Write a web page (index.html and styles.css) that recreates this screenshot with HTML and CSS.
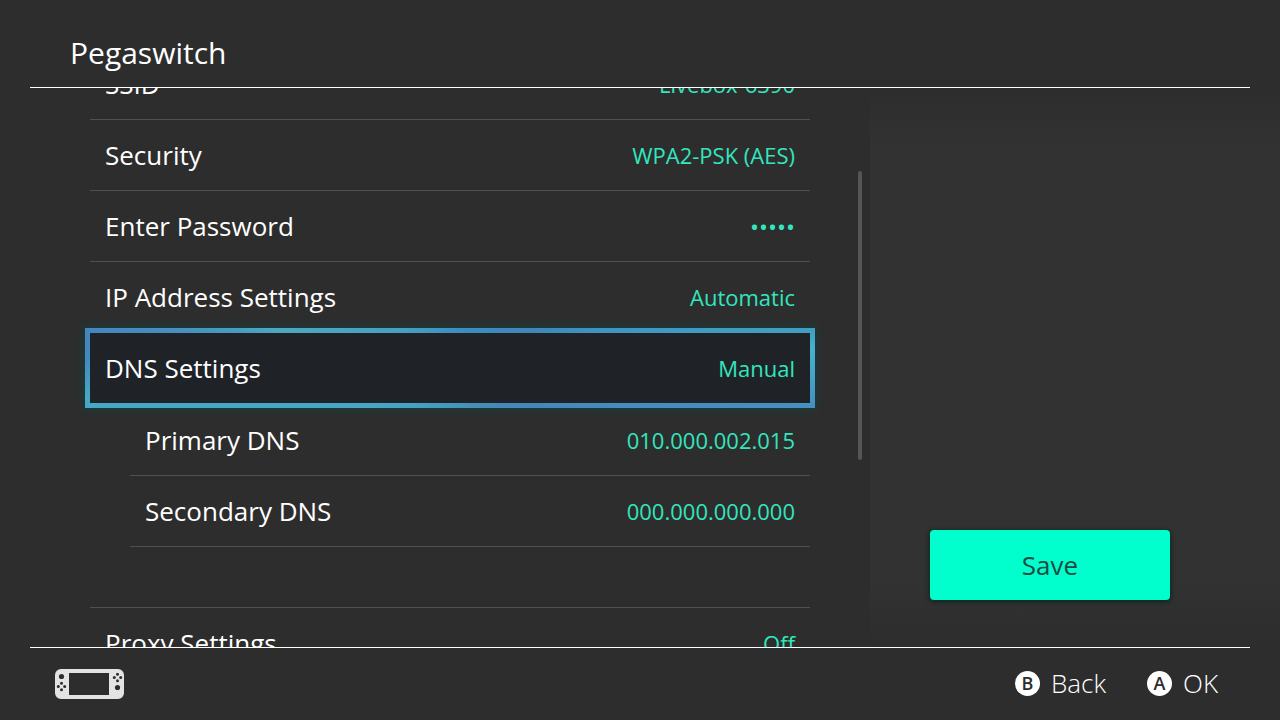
FILE: index.html
```html
<!DOCTYPE html>
<html lang="en">
<head>
  <meta charset="UTF-8">
  <meta name="viewport" content="width=device-width, initial-scale=1.0">
  <title>Pegaswitch</title>
  <link rel="stylesheet" href="styles.css">
</head>
<body>
  <header class="header">
    <h1>Pegaswitch</h1>
  </header>

  <main class="content">
    <!-- Connection settings -->
    <ul class="settings">
      <li><button class="row" type="button">SSID <span class="value">Livebox-6390</span></button></li>
      <li><button class="row" type="button">Security <span class="value">WPA2-PSK (AES)</span></button></li>
      <li><button class="row" type="button">Enter Password <span class="value dots">•••••</span></button></li>
      <li><button class="row" type="button">IP Address Settings <span class="value">Automatic</span></button></li>
      <li><button class="row selected" type="button">DNS Settings <span class="value">Manual</span></button></li>
      <li class="sub"><button class="row" type="button">Primary DNS <span class="value">010.000.002.015</span></button></li>
      <li class="sub"><button class="row" type="button">Secondary DNS <span class="value">000.000.000.000</span></button></li>
      <li class="group"><button class="row" type="button">Proxy Settings <span class="value">Off</span></button></li>
    </ul>

    <div class="scrollbar">
      <div class="thumb"></div>
    </div>

    <!-- Save panel -->
    <aside class="panel">
      <button class="save" type="button">Save</button>
    </aside>
  </main>

  <footer class="footer">
    <svg class="console" width="70" height="30" viewBox="0 0 70 30" aria-label="Handheld">
      <path fill="#e3e3e3" fill-rule="evenodd" d="M6 0H63a6 6 0 0 1 6 6V24a6 6 0 0 1-6 6H6a6 6 0 0 1-6-6V6A6 6 0 0 1 6 0ZM14 4V26H54V4Z"/>
      <g fill="#2d2d2d">
        <circle cx="6.5" cy="7.5" r="2.6"/>
        <circle cx="6.5" cy="14.3" r="1.5"/>
        <circle cx="6.5" cy="20.7" r="1.5"/>
        <circle cx="3.3" cy="17.5" r="1.5"/>
        <circle cx="9.7" cy="17.5" r="1.5"/>
        <circle cx="62.5" cy="5.3" r="1.5"/>
        <circle cx="62.5" cy="11.7" r="1.5"/>
        <circle cx="59.3" cy="8.5" r="1.5"/>
        <circle cx="65.7" cy="8.5" r="1.5"/>
        <circle cx="62.5" cy="18.5" r="2.6"/>
      </g>
    </svg>

    <div class="hints">
      <button class="hint" type="button"><span class="key">B</span> Back</button>
      <button class="hint" type="button"><span class="key">A</span> OK</button>
    </div>
  </footer>
</body>
</html>
```
FILE: styles.css
```css
:root {
  --bg: #2d2d2d;
  --panel: #323232;
  --fg: #ffffff;
  --line: #505050;
  --accent: #00ffcc;
  --value: #32e6be;
}

* {
  box-sizing: border-box;
}

body {
  margin: 0;
  height: 100vh;
  display: flex;
  flex-direction: column;
  overflow: hidden;
  background: var(--bg);
  color: var(--fg);
  font-family: 'Open Sans', 'Noto Sans', sans-serif;
}

button {
  margin: 0;
  padding: 0;
  border: none;
  background: none;
  color: inherit;
  font: inherit;
  cursor: pointer;
}

.header {
  flex: none;
  height: 88px;
  margin: 0 30px;
  padding: 32px 40px 0;
  border-bottom: 1px solid var(--fg);
}

h1 {
  margin: 0;
  font-size: 30px;
  line-height: 42px;
  font-weight: 400;
}

.content {
  flex: 1;
  min-height: 0;
  display: flex;
  overflow: hidden;
}

/* the list is scrolled, so the first row is partly hidden */
.settings {
  flex: 1;
  margin: -39px 0 0 90px;
  padding: 0;
  list-style: none;
}

.row {
  display: flex;
  justify-content: space-between;
  align-items: center;
  width: 100%;
  height: 71px;
  padding: 0 15px;
  border-bottom: 1px solid var(--line);
  font-size: 26px;
}

.value {
  color: var(--value);
  font-size: 22px;
}

.dots {
  font-size: 24px;
  font-weight: 500;
}

.sub {
  margin-left: 40px;
}

.group {
  margin-top: 60px;
  border-top: 1px solid var(--line);
}

.selected {
  position: relative;
  height: 70px;
  margin-bottom: 2px;
  border: none;
  background: #1f2328;
  box-shadow: 0 0 8px 7px #00505066;
}

.selected::after {
  content: '';
  position: absolute;
  inset: -5px;
  border: 5px solid;
  border-image: conic-gradient(#3d8fc4, #3d88bb 67deg, #3f9fc4 84deg, #45b4cc 87deg, #4590c0 96deg, #4387b8 114deg, #45a9c6 255deg, #45a9c6 265deg, #4387c0 272deg, #4387c0 276deg, #4aa8c0 282deg, #3d8fc4) 5;
}

.scrollbar {
  flex: none;
  width: 4px;
  margin: 0 8px 0 48px;
  padding-top: 83px;
}

.thumb {
  height: 289px;
  border-radius: 2px;
  background: #555555;
}

.panel {
  flex: none;
  width: 410px;
  display: flex;
  align-items: flex-end;
  padding: 0 110px 47px 60px;
  background: linear-gradient(var(--bg), var(--panel) 60px, var(--panel) 490px, var(--bg));
}

.save {
  width: 100%;
  height: 70px;
  border-radius: 4px;
  background: var(--accent);
  box-shadow: 0 1px 4px 1px #00281e;
  color: #1e4b41;
  font-size: 26px;
}

.footer {
  flex: none;
  height: 73px;
  margin: 0 30px;
  padding: 0 32px 0 25px;
  display: flex;
  justify-content: space-between;
  align-items: center;
  border-top: 1px solid var(--fg);
}

.hints {
  display: flex;
  gap: 41px;
  padding-bottom: 2px;
}

.hint {
  display: flex;
  align-items: center;
  gap: 11px;
  font-size: 26px;
  font-weight: 300;
}

.key {
  width: 25px;
  height: 25px;
  border-radius: 50%;
  background: var(--fg);
  color: var(--bg);
  font-size: 18px;
  font-weight: 600;
  line-height: 25px;
  text-align: center;
}
```
